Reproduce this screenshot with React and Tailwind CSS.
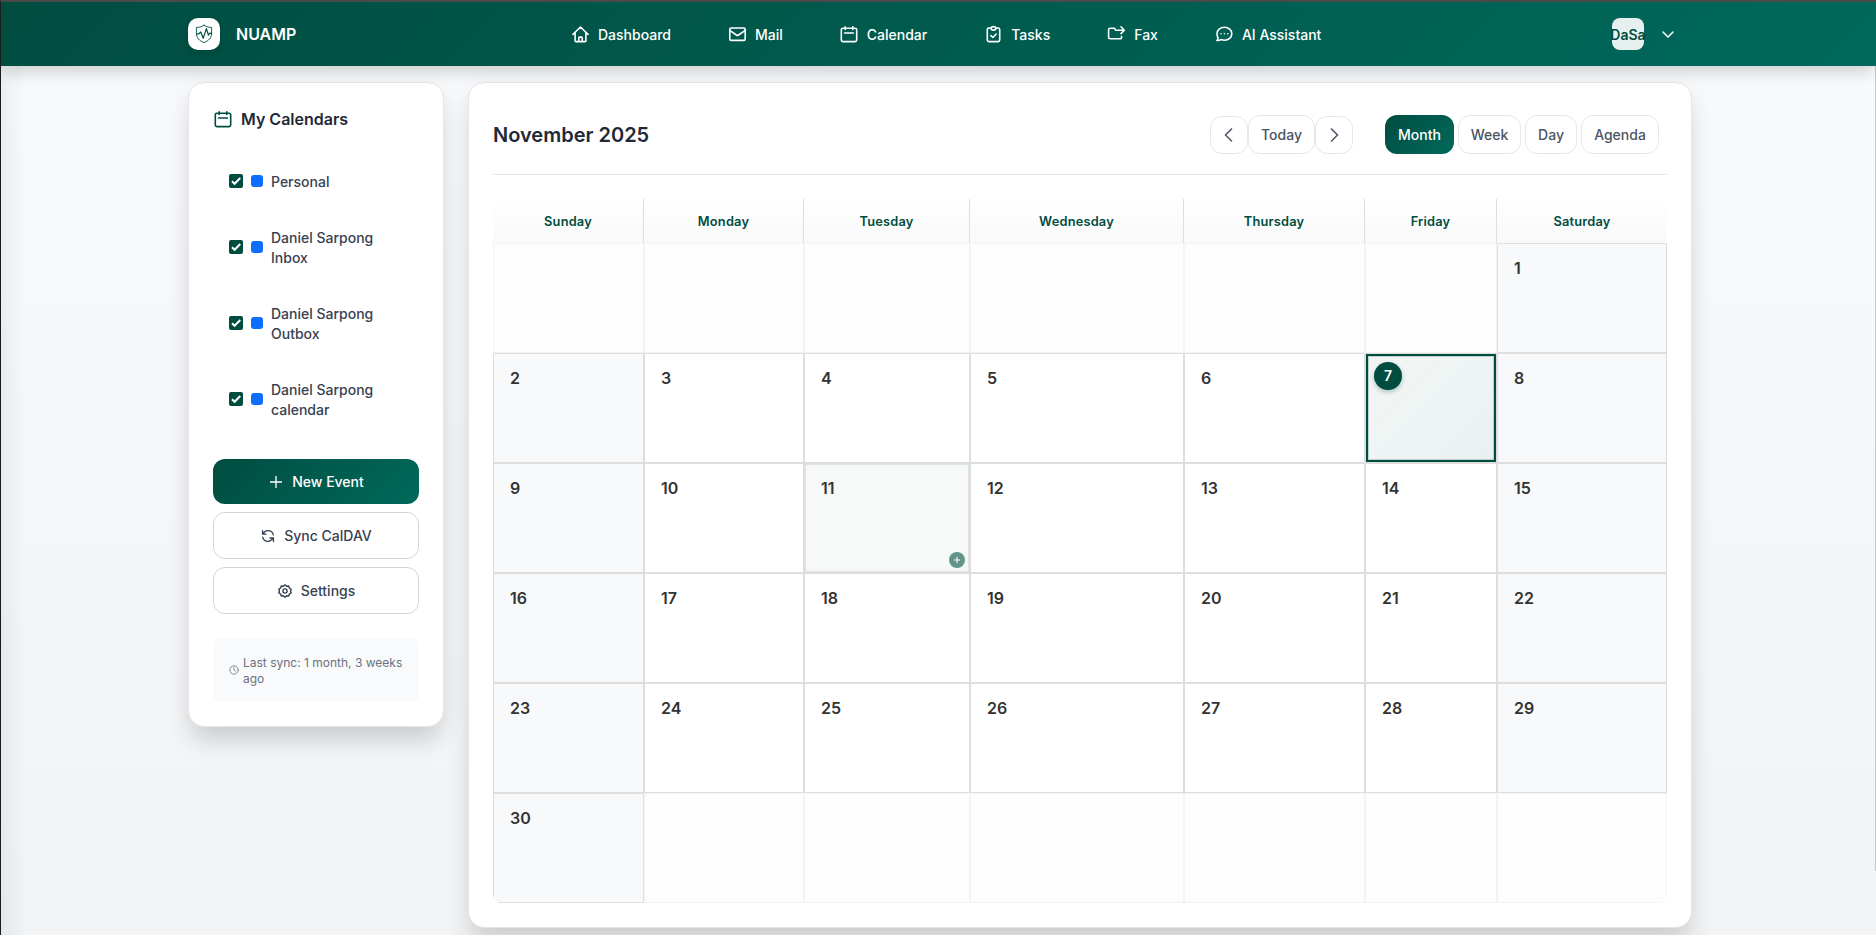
import React from 'react';
import clsx from 'clsx';

const Icon = ({ size = 20, stroke = 1.6, className, children }) => (
  <svg
    width={size}
    height={size}
    viewBox="0 0 20 20"
    fill="none"
    stroke="currentColor"
    strokeWidth={stroke}
    strokeLinecap="round"
    strokeLinejoin="round"
    className={clsx('shrink-0', className)}
  >
    {children}
  </svg>
);

const HomeIcon = () => (
  <Icon>
    <path d="M2.800 10.500 10.500 3l7.700 7.500M5.100 8.800v8c0 .5.3.8.8.8h9.200c.5 0 .8-.3.8-.8v-8" />
    <path d="M8.800 17.400v-3.600c0-.4.3-.7.7-.7h2c.4 0 .7.3.7.7v3.600" />
  </Icon>
);

const MailIcon = () => (
  <Icon>
    <rect x="2.800" y="4" width="15.400" height="12.400" rx="1.400" />
    <path d="m3.100 6.600 6.300 4.400c.7.5 1.500.5 2.200 0l6.300-4.400" />
  </Icon>
);

const CalendarIcon = ({ className }) => (
  <Icon className={className}>
    <rect x="2.300" y="4.200" width="15.400" height="13.400" rx="1.600" />
    <path d="M6.200 2.700v2.800M13.800 2.700v2.800M5.600 9h8.800" />
  </Icon>
);

const TasksIcon = () => (
  <Icon>
    <path d="M7.900 4H5.900c-.9 0-1.600.7-1.600 1.600v10.400c0 .9.7 1.600 1.600 1.600h9.200c.9 0 1.600-.7 1.600-1.600V5.600c0-.9-.7-1.600-1.600-1.600h-2" />
    <path d="M8 4C8.300 3.100 9.300 2.600 10.500 2.600s2.200.5 2.500 1.400c0 1.400-1 2.100-2.500 2.100S8 5.400 8 4ZM7.900 11.600l2 1.900 3.300-3.500" />
  </Icon>
);

const FaxIcon = () => (
  <Icon>
    <path d="M17.800 6.200H9.600L8.400 4.200H4.200c-.9 0-1.600.7-1.600 1.600v7.400c0 .9.7 1.600 1.600 1.600h10.200c.6 0 1-.3 1.100-.9v-1.400M15 2.800l3.300 3.400L15 9.600" />
  </Icon>
);

const ChatIcon = () => (
  <Icon>
    <path d="M10.400 3.200c4.200 0 7.400 2.800 7.400 6.500s-3.200 6.500-7.400 6.500c-1.200 0-2.300-.2-3.300-.6-1.200.7-2.600 1-4.200.9.800-1 1.100-1.800 1.100-2.800-.7-1.100-1-2.500-1-4 0-3.700 3.200-6.500 7.400-6.500Z" />
    <path d="M7 9.800h.01M10.400 9.800h.01M13.800 9.800h.01" />
  </Icon>
);

const SyncIcon = () => (
  <Icon size={14} stroke={1.9}>
    <path d="M17.600 8.400C16.800 4.700 13.700 2.400 10.200 2.400c-3 0-5.500 1.500-6.900 4M2.200 2.200v5h5M2.400 11.600c.8 3.700 3.900 6 7.400 6 3 0 5.500-1.500 6.900-4M17.800 17.800v-5h-5" />
  </Icon>
);

const GearIcon = () => (
  <Icon size={14} stroke={2}>
    <path d="m10 1.200 2.300 2 3-.4.900 2.900 2.600 1.500-.8 2.800.8 2.800-2.600 1.500-.9 2.900-3-.4-2.300 2-2.300-2-3 .4-.9-2.900-2.600-1.500.8-2.800-.8-2.800 2.600-1.500.9-2.900 3 .4z" />
    <circle cx="10" cy="10" r="3" />
  </Icon>
);

const NAV = [
  { label: 'Dashboard', icon: HomeIcon },
  { label: 'Mail', icon: MailIcon },
  { label: 'Calendar', icon: CalendarIcon },
  { label: 'Tasks', icon: TasksIcon },
  { label: 'Fax', icon: FaxIcon },
  { label: 'AI Assistant', icon: ChatIcon },
];

const CALENDARS = ['Personal', 'Daniel Sarpong Inbox', 'Daniel Sarpong Outbox', 'Daniel Sarpong calendar'];
const WEEKDAYS = ['Sunday', 'Monday', 'Tuesday', 'Wednesday', 'Thursday', 'Friday', 'Saturday'];
const VIEWS = ['Month', 'Week', 'Day', 'Agenda'];

const TODAY = 7;
const HOVERED = 11;
const FIRST_WEEKDAY = 6;
const DAYS_IN_MONTH = 30;

const cells = Array.from({ length: 42 }, (_, i) => {
  const day = i - FIRST_WEEKDAY + 1;
  return day >= 1 && day <= DAYS_IN_MONTH ? day : null;
});

const COLS = 'grid grid-cols-[151px_160px_166px_214px_181px_132px_170px]';
const CARD = 'rounded-2xl border border-[#e3e5e8] bg-white p-6 shadow-[0_20px_25px_-5px_rgba(0,0,0,0.1),0_8px_24px_rgba(0,0,0,0.08)]';

const Header = () => (
  <header className="relative z-10 h-16 bg-[linear-gradient(135deg,#004d40_0%,#00695c_100%)] shadow-[0_10px_15px_-3px_rgba(0,0,0,0.1),0_4px_16px_rgba(0,0,0,0.08)]">
    <div className="ml-[187px] flex h-full w-[1504px] items-center">
      <div className="flex w-[382px] items-center gap-4">
        <div className="flex size-8 items-center justify-center rounded-[10px] bg-white text-[#004d40] shadow-[0_4px_8px_rgba(0,0,0,0.12)]">
          <Icon stroke={0.9}>
            <path d="M10 1.400c2.400 1.500 5 2 7.600 2v6c0 4.400-3 7.500-7.600 9.200-4.600-1.700-7.600-4.800-7.600-9.200v-6c2.600 0 5.200-.5 7.600-2Z" />
            <path d="M2.600 9.800h2.200l2-1.800 2.400 6.200 3.200-9.600 2 6.600 1.200-2 1.800.4" strokeWidth="1.200" />
          </Icon>
        </div>
        <span className="text-base font-semibold text-white">NUAMP</span>
      </div>
      <nav className="flex flex-1 items-center gap-14 text-sm font-medium text-white">
        {NAV.map(({ label, icon: NavIcon }) => (
          <a key={label} className="flex items-center gap-2 whitespace-nowrap">
            <NavIcon />
            <span className="pt-0.5">{label}</span>
          </a>
        ))}
      </nav>
      <div className="flex items-center gap-[17px] pr-[17px] text-white">
        <div className="flex size-8 items-center justify-center rounded-lg bg-[#e6f0ee] pt-0.5 text-sm font-semibold text-[#004d40]">
          DaSa
        </div>
        <svg width="14" height="14" viewBox="0 0 14 14" fill="none" stroke="currentColor" strokeWidth="1.5" strokeLinecap="round" strokeLinejoin="round">
          <path d="m2 5 5 5 5-5" />
        </svg>
      </div>
    </div>
  </header>
);

const Sidebar = () => (
  <aside className={clsx(CARD, 'w-64')}>
    <h2 className="flex h-6 items-center gap-2 text-base font-semibold text-[#1f2937]">
      <CalendarIcon className="text-[#004d40]" />
      My Calendars
    </h2>
    <ul className="mt-6 flex flex-col gap-1">
      {CALENDARS.map((name) => (
        <li key={name} className="flex items-center gap-2 px-4 pt-[17px] pb-[15px]">
          <span className="mb-0.5 flex size-3.5 shrink-0 items-center justify-center rounded-[2px] bg-[#004d40]">
            <svg width="14" height="14" viewBox="0 0 14 14" fill="none" stroke="#fff" strokeWidth="2">
              <path d="m3 7.300 2.600 2.500 5.600-5.800" />
            </svg>
          </span>
          <span className="mb-0.5 size-3 shrink-0 rounded-[3px] bg-[#0d6efd]" />
          <span className="text-sm font-medium text-[#374151]">{name}</span>
        </li>
      ))}
    </ul>
    <div className="mt-6 flex flex-col gap-2 text-sm font-medium text-[#374151]">
      <button className="flex h-[45px] items-center justify-center gap-2 rounded-xl bg-[linear-gradient(135deg,#004d40_0%,#00695c_100%)] text-white">
        <svg width="16" height="16" viewBox="0 0 16 16" stroke="currentColor" strokeWidth="1.300">
          <path d="M2 8h12M8 2v12" />
        </svg>
        New Event
      </button>
      <button className="flex h-[47px] items-center justify-center gap-[9px] rounded-xl border border-[#d1d5db] pl-px">
        <SyncIcon />
        Sync CalDAV
      </button>
      <button className="flex h-[47px] items-center justify-center gap-[9px] rounded-xl border border-[#d1d5db] pl-px">
        <GearIcon />
        Settings
      </button>
    </div>
    <div className="mt-6 flex items-center gap-1 rounded-lg bg-[#f9fafb] px-4 pt-[17px] pb-[15px] text-xs leading-4 text-[#6b7280]">
      <Icon size={10} stroke={1.6} className="mb-0.5">
        <circle cx="10" cy="10" r="8.400" />
        <path d="M10 5v5l3 2.500" />
      </Icon>
      <span className="-mr-1">Last sync: 1 month, 3 weeks ago</span>
    </div>
  </aside>
);

const Toolbar = () => (
  <div className="flex h-[68px] items-start justify-between border-b border-[#e5e7eb] pt-2 pr-2">
    <h1 className="flex h-[39px] items-center text-xl font-semibold text-[#1f2937]">November 2025</h1>
    <div className="flex items-end text-sm font-medium text-[#4b5563]">
      <button className="flex size-[38px] items-center justify-center rounded-xl border border-[#e5e7eb]">
        <svg width="16" height="16" viewBox="0 0 16 16" fill="none" stroke="currentColor" strokeWidth="1.500">
          <path d="m11 1.500-6.500 6.500 6.500 6.500" />
        </svg>
      </button>
      <button className="h-[39px] w-[67px] rounded-xl border border-[#e5e7eb]">Today</button>
      <button className="flex size-[38px] items-center justify-center rounded-xl border border-[#e5e7eb]">
        <svg width="16" height="16" viewBox="0 0 16 16" fill="none" stroke="currentColor" strokeWidth="1.500">
          <path d="m5 1.500 6.500 6.500-6.500 6.500" />
        </svg>
      </button>
      <div className="ml-8 grid grid-cols-[69px_63px_52px_78px] gap-1">
        {VIEWS.map((view) => (
          <button
            key={view}
            className={clsx(
              'h-[39px] rounded-xl',
              view === 'Month'
                ? 'bg-[linear-gradient(135deg,#004d40_0%,#00695c_100%)] text-white'
                : 'border border-[#e5e7eb]'
            )}
          >
            {view}
          </button>
        ))}
      </div>
    </div>
  </div>
);

const DayCell = ({ day, column }) => {
  if (!day) return <div className="border border-[#f3f3f3] bg-[#fdfdfd]" />;

  if (day === TODAY) {
    return (
      <div className="border border-[#dedede]">
        <div className="h-full border-2 border-[#004d40] bg-[linear-gradient(135deg,#f2f4f2_0%,#eef4f4_50%,#e9f1f0_100%)] p-1.5 shadow-[inset_0_0_0_1px_rgba(0,77,64,0.2)]">
          <span className="flex size-7 items-center justify-center rounded-full bg-[#004d40] text-sm font-semibold text-white shadow-[0_2px_4px_rgba(0,77,64,0.3)]">
            {day}
          </span>
        </div>
      </div>
    );
  }

  const weekend = column === 0 || column === 6;
  return (
    <div
      className={clsx(
        'relative border border-[#dedede] px-4 py-3 text-base font-semibold text-[#333333]',
        weekend && 'bg-[#f8f9fb]',
        day === HOVERED && 'bg-[#f6f9f8] shadow-[inset_0_0_0_1px_#dde4e2]'
      )}
    >
      {day}
      {day === HOVERED && (
        <span className="absolute right-1 bottom-1 flex size-4 items-center justify-center rounded-full bg-[#62948a]">
          <svg width="6" height="6" viewBox="0 0 6 6" stroke="#fff" strokeWidth="1">
            <path d="M0 3h6M3 0v6" />
          </svg>
        </span>
      )}
    </div>
  );
};

const Month = () => (
  <div className="mt-6 overflow-hidden rounded-lg">
    <div className={clsx(COLS, 'h-11 bg-linear-to-b from-white to-[#f8f9fa]')}>
      {WEEKDAYS.map((name) => (
        <div
          key={name}
          className="flex items-center justify-center border-r border-[#dedede] pt-0.5 text-[12.8px] font-semibold tracking-[0.2px] text-[#004d40] last:border-r-0"
        >
          {name}
        </div>
      ))}
    </div>
    <div className={clsx(COLS, 'auto-rows-[110px]')}>
      {cells.map((day, i) => (
        <DayCell key={i} day={day} column={i % 7} />
      ))}
    </div>
  </div>
);

export default function App() {
  return (
    <div className="h-[935px] w-[1876px] overflow-hidden border-t-2 border-l border-t-[#4a4a4a] border-l-[#1c1c1c] bg-[linear-gradient(180deg,#f8fafc_0%,#f1f3f5_100%)] font-['Inter',sans-serif]">
      <Header />
      <div className="flex h-[869px] justify-between">
        <div className="w-6 bg-linear-to-r from-[#004d40]/6 to-transparent" />
        <main className="ml-[163px] flex flex-1 items-start gap-6 pt-4">
          <Sidebar />
          <section className={clsx(CARD, 'w-[1224px]')}>
            <Toolbar />
            <Month />
          </section>
        </main>
        <div className="h-[805px] w-px bg-[#c4c6c8]" />
      </div>
    </div>
  );
}
